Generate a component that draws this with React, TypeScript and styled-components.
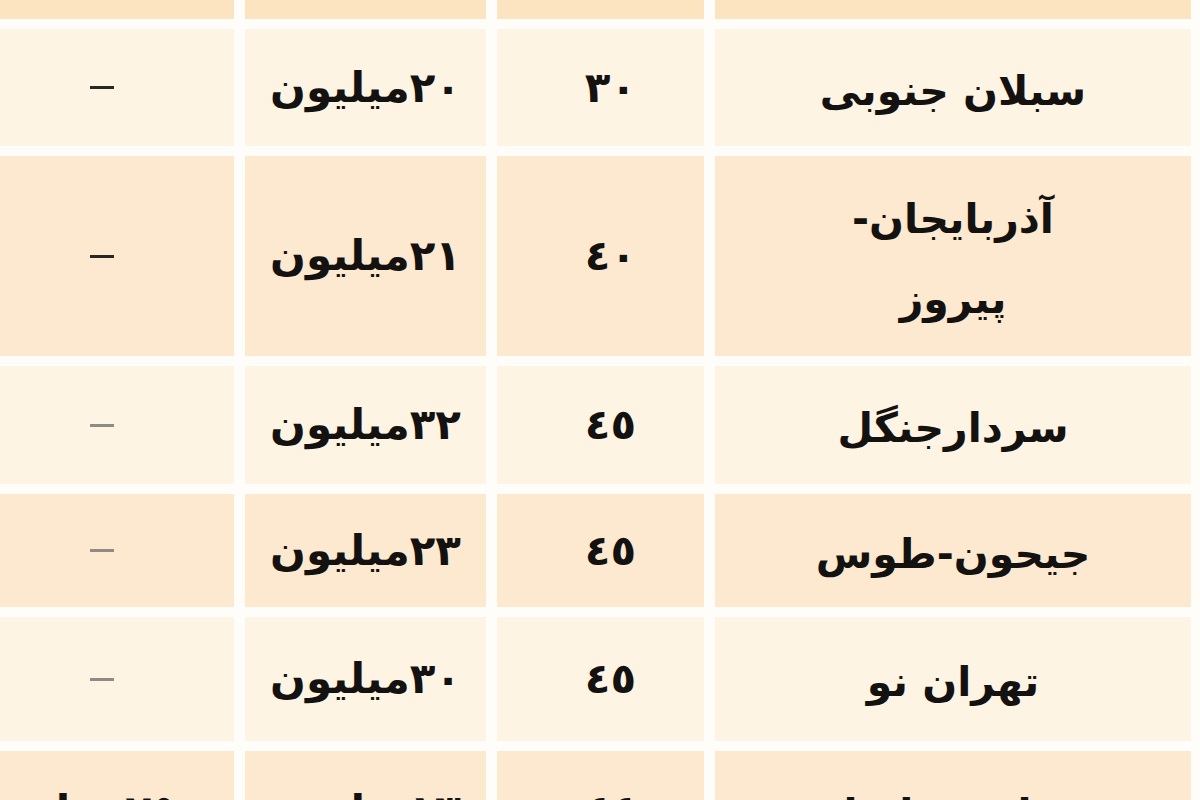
import React from "react";
import styled, { createGlobalStyle } from "styled-components";

const Global = createGlobalStyle`
  html, body {
    margin: 0;
    padding: 0;
    background: #fffdf9;
    overflow: hidden;
  }
  body {
    font-family: "DejaVu Sans", sans-serif;
  }
`;

const Table = styled.div`
  box-sizing: border-box;
  width: 1200px;
  height: 800px;
  overflow: hidden;
  padding-right: 9px;
  direction: rtl;
  display: grid;
  grid-template-columns: 476px 207px 241px 234px;
  grid-template-rows: 19px 117px 200px 118px 113px 124px 120px;
  column-gap: 11px;
  row-gap: 10px;
  background: #fffdf9;
`;

type Tone = "head" | "light" | "mid";

const tones: Record<Tone, string> = {
  head: "#fde4c1",
  light: "#fdf4e3",
  mid: "#fde9cf",
};

const Cell = styled.div<{ $tone: Tone }>`
  background: ${(p) => tones[p.$tone]};
  display: flex;
  align-items: center;
  justify-content: center;
  text-align: center;
  color: #141210;
  font-family: "DejaVu Sans", sans-serif;
  font-weight: bold;
  font-size: 40px;
  line-height: 80px;
  overflow: hidden;
`;

const Name = styled.span`
  font-size: 41px;
  padding-top: 6px;
`;

const Count = styled.span`
  font-size: 42px;
  letter-spacing: -3px;
  padding-left: 20px;
`;

const Price = styled.span`
  font-size: 42px;
`;

const Dash = styled.span<{ $faint?: boolean }>`
  display: block;
  width: 24px;
  height: 3px;
  background: ${(p) => (p.$faint ? "#8f8a84" : "#2a2622")};
  margin-right: 30px;
`;

const Extra = styled.span`
  font-size: 42px;
`;

type Row = {
  tone: Tone;
  name: React.ReactNode;
  count: string;
  price: string;
  extra: React.ReactNode;
};

const rows: Row[] = [
  { tone: "light", name: "سبلان جنوبی", count: "٣٠", price: "٢٠میلیون", extra: <Dash /> },
  {
    tone: "mid",
    name: (
      <>
        آذربایجان-
        <br />
        پیروز
      </>
    ),
    count: "٤٠",
    price: "٢١میلیون",
    extra: <Dash />,
  },
  { tone: "light", name: "سردارجنگل", count: "٤٥", price: "٣٢میلیون", extra: <Dash $faint /> },
  { tone: "mid", name: "جیحون-طوس", count: "٤٥", price: "٢٣میلیون", extra: <Dash $faint /> },
  { tone: "light", name: "تهران نو", count: "٤٥", price: "٣٠میلیون", extra: <Dash $faint /> },
  { tone: "mid", name: "میدان خراسان", count: "٤٤", price: "١٣میلیون", extra: "٢٥٠هزار" },
];

export default function App() {
  return (
    <>
      <Global />
      <Table>
        <Cell $tone="head" />
        <Cell $tone="head" />
        <Cell $tone="head" />
        <Cell $tone="head" />
        {rows.map((r, i) => (
          <React.Fragment key={i}>
            <Cell $tone={r.tone}>
              <Name>{r.name}</Name>
            </Cell>
            <Cell $tone={r.tone}>
              <Count>{r.count}</Count>
            </Cell>
            <Cell $tone={r.tone}>
              <Price>{r.price}</Price>
            </Cell>
            <Cell $tone={r.tone}>
              <Extra>{r.extra}</Extra>
            </Cell>
          </React.Fragment>
        ))}
      </Table>
    </>
  );
}
